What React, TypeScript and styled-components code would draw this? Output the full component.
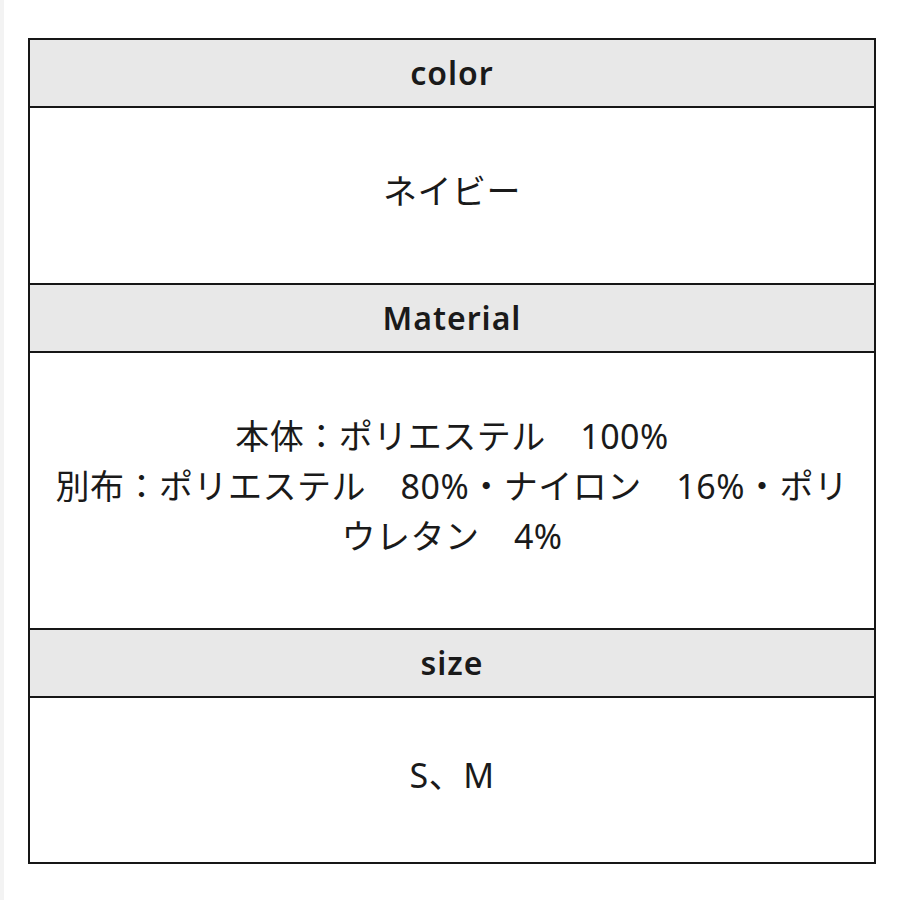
import styled, { createGlobalStyle } from 'styled-components'

const GlobalStyle = createGlobalStyle`
  html, body {
    margin: 0;
    padding: 0;
    background: #ffffff;
  }
  body {
    border-left: 4px solid #f3f3f3;
    font-family: "Noto Sans", "Noto Sans CJK JP", sans-serif;
    color: #1a1a1a;
  }
`

const rows = [
  { title: 'color', body: ['ネイビー'], height: 175 },
  {
    title: 'Material',
    body: ['本体：ポリエステル　100%', '別布：ポリエステル　80%・ナイロン　16%・ポリウレタン　4%'],
    height: 275,
  },
  { title: 'size', body: ['S、M'], height: 164 },
]

const App = () => {
  return (
    <Page>
      <GlobalStyle />
      <Table>
        {rows.map((row) => (
          <Section key={row.title}>
            <Header>{row.title}</Header>
            <Body $height={row.height}>
              {row.body.map((line) => (
                <Line key={line}>{line}</Line>
              ))}
            </Body>
          </Section>
        ))}
      </Table>
    </Page>
  )
}

export default App

const Page = styled.div`
  padding: 38px 0 0 24px;
  width: 900px;
  height: 900px;
  box-sizing: border-box;
`

const Table = styled.div`
  width: 848px;
  box-sizing: border-box;
  border: 2px solid #161616;
  display: flex;
  flex-direction: column;
`

const Section = styled.div`
  display: flex;
  flex-direction: column;
  border-bottom: 2px solid #161616;

  &:last-child {
    border-bottom: none;
  }
`

const Header = styled.div`
  height: 68px;
  display: flex;
  align-items: center;
  justify-content: center;
  background-color: #e8e8e8;
  border-bottom: 2px solid #161616;
  font-size: 32px;
  font-weight: 600;
  letter-spacing: 1px;
  padding-bottom: 2px;
  box-sizing: border-box;
`

const Body = styled.div<{ $height: number }>`
  height: ${(p) => p.$height}px;
  display: flex;
  flex-direction: column;
  align-items: center;
  justify-content: center;
  padding: 0 20px 10px;
  box-sizing: border-box;
  text-align: center;
`

const Line = styled.div`
  font-size: 34px;
  line-height: 50px;
  letter-spacing: 0.5px;
`
